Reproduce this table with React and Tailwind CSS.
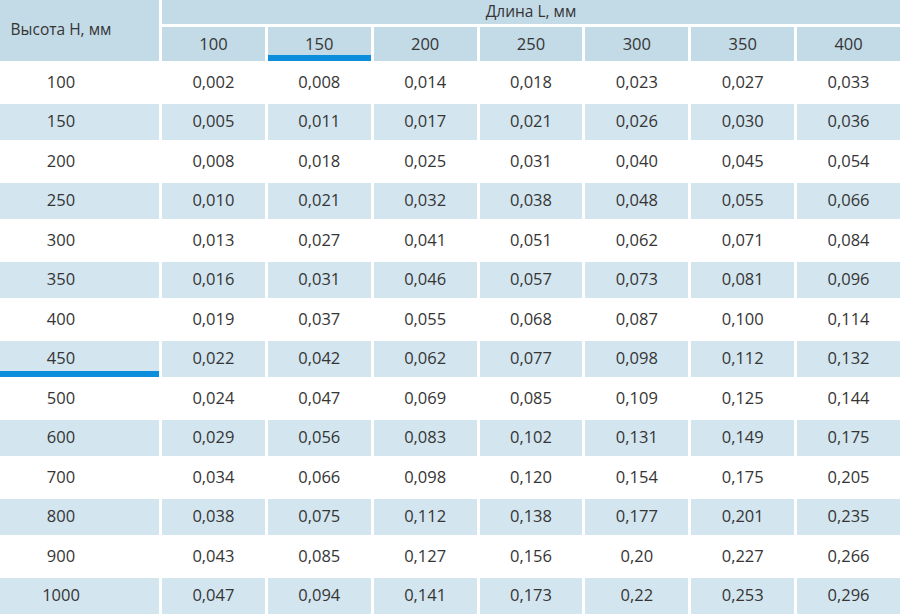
import React from 'react';

const lengths = [100, 150, 200, 250, 300, 350, 400];

const rows = [
  [100, '0,002', '0,008', '0,014', '0,018', '0,023', '0,027', '0,033'],
  [150, '0,005', '0,011', '0,017', '0,021', '0,026', '0,030', '0,036'],
  [200, '0,008', '0,018', '0,025', '0,031', '0,040', '0,045', '0,054'],
  [250, '0,010', '0,021', '0,032', '0,038', '0,048', '0,055', '0,066'],
  [300, '0,013', '0,027', '0,041', '0,051', '0,062', '0,071', '0,084'],
  [350, '0,016', '0,031', '0,046', '0,057', '0,073', '0,081', '0,096'],
  [400, '0,019', '0,037', '0,055', '0,068', '0,087', '0,100', '0,114'],
  [450, '0,022', '0,042', '0,062', '0,077', '0,098', '0,112', '0,132'],
  [500, '0,024', '0,047', '0,069', '0,085', '0,109', '0,125', '0,144'],
  [600, '0,029', '0,056', '0,083', '0,102', '0,131', '0,149', '0,175'],
  [700, '0,034', '0,066', '0,098', '0,120', '0,154', '0,175', '0,205'],
  [800, '0,038', '0,075', '0,112', '0,138', '0,177', '0,201', '0,235'],
  [900, '0,043', '0,085', '0,127', '0,156', '0,20', '0,227', '0,266'],
  [1000, '0,047', '0,094', '0,141', '0,173', '0,22', '0,253', '0,296'],
];

// highlighted row / column (blue marker under the cell)
const markRow = 450;
const markCol = 150;

const App = () => {
  return (
    <div
      className="w-[900px] h-[615px] overflow-hidden bg-white text-[#353535] select-none"
      style={{ fontFamily: '"Open Sans", "Noto Sans", sans-serif' }}
    >
      <div className="grid grid-cols-[159px_repeat(7,1fr)] grid-rows-[24px_34px] gap-[3px]">
        {/* шапка */}
        <div className="row-span-2 bg-[#c3dae7] flex items-center justify-center pr-[37px] text-[15.5px] pb-[1px]">
          Высота H, мм
        </div>
        <div className="col-span-7 bg-[#c3dae7] flex items-center justify-center text-[15.5px]">
          Длина L, мм
        </div>
        {lengths.map(l => (
          <div key={l} className="relative bg-[#c3dae7] flex items-center justify-center text-[16.5px]">
            {l}
            {l === markCol && (
              <span className="absolute left-0 right-0 bottom-0 h-[6px] bg-[#0b8edb]" />
            )}
          </div>
        ))}
      </div>

      <div className="mt-[3px] grid grid-cols-[159px_repeat(7,1fr)] auto-rows-[36.5px] gap-[3px] text-[16.5px]">
        {rows.map((r, i) => {
          const bg = i % 2 === 1 ? 'bg-[#d3e5ef]' : 'bg-white';
          return r.map((v, j) => (
            <div
              key={`${i}-${j}`}
              className={`relative ${bg} flex items-center justify-center ${j === 0 ? 'pr-[37px]' : ''}`}
            >
              {v}
              {j === 0 && r[0] === markRow && (
                <span className="absolute left-0 right-0 bottom-0 h-[6px] bg-[#0b8edb]" />
              )}
            </div>
          ));
        })}
      </div>
    </div>
  );
};

export default App;
